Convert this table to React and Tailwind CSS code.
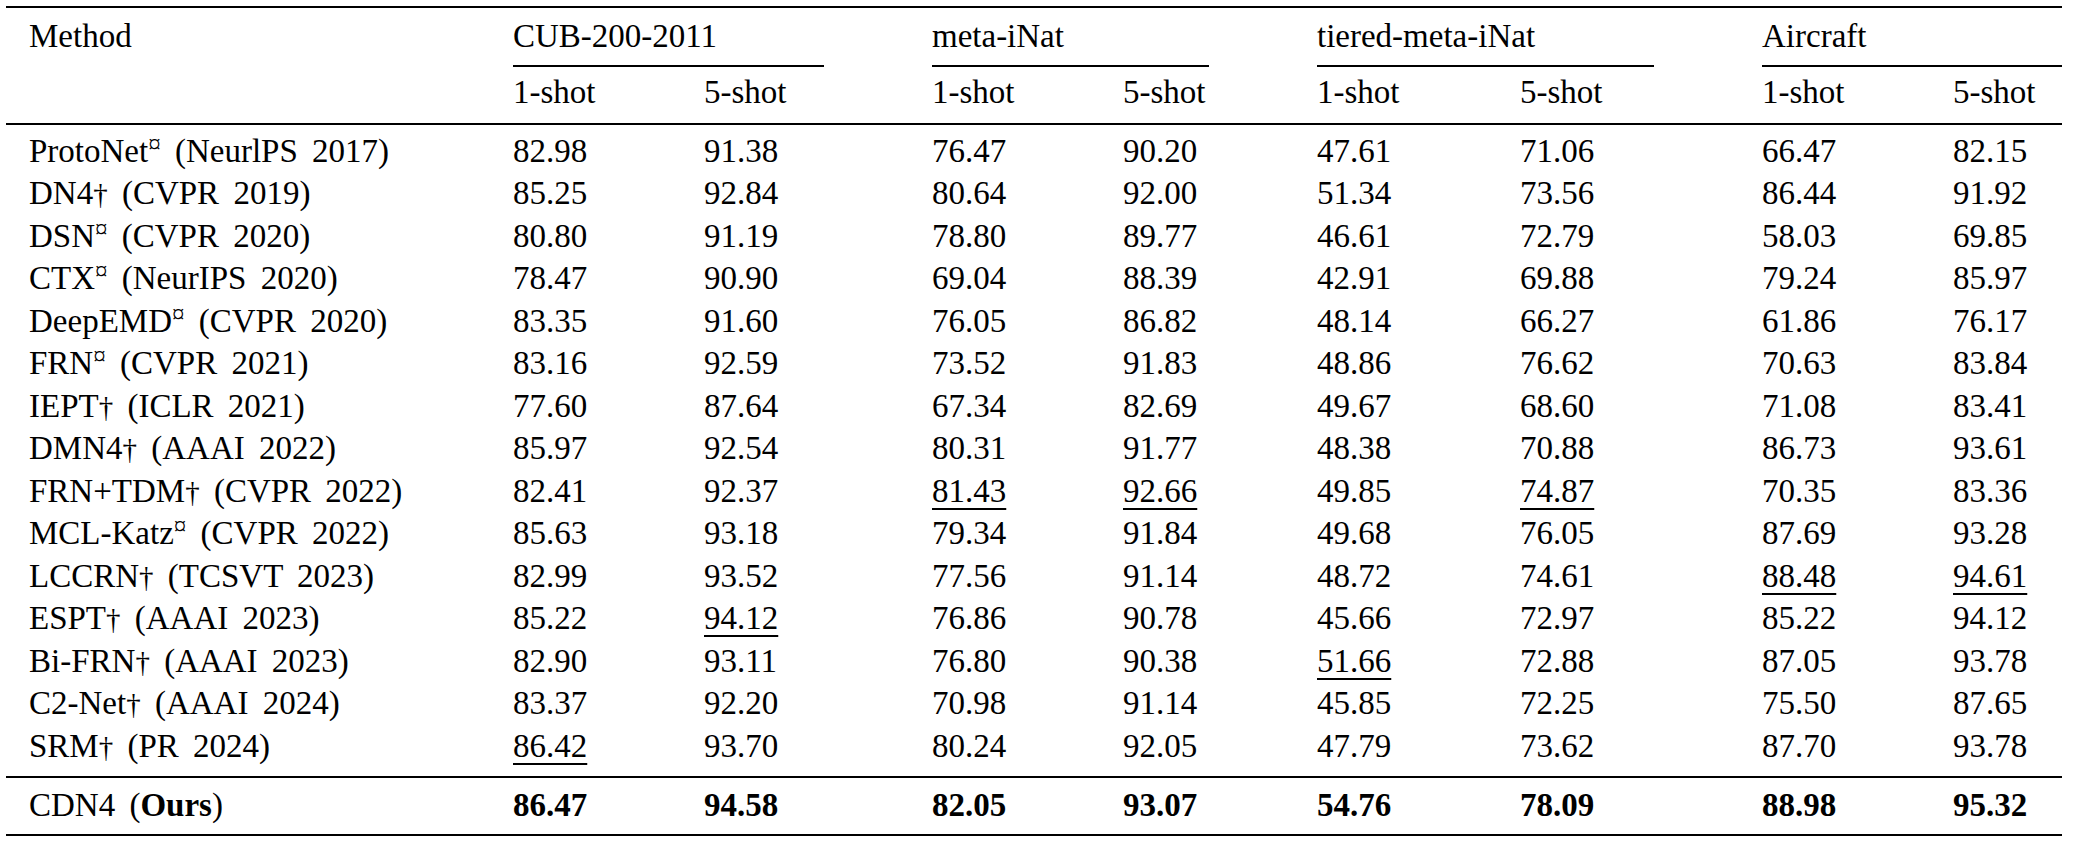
// Few-shot fine-grained classification results table (booktabs style).
import React from 'react';

const COLS = 'grid grid-cols-[507px_191px_228px_191px_194px_203px_242px_191px_109px]';

const groups = ['CUB-200-2011', 'meta-iNat', 'tiered-meta-iNat', 'Aircraft'];

// A leading "_" marks a second-best (underlined) result.
const rows = [
  ['ProtoNet', '¤', 'NeurlPS 2017', ['82.98', '91.38', '76.47', '90.20', '47.61', '71.06', '66.47', '82.15']],
  ['DN4', '†', 'CVPR 2019', ['85.25', '92.84', '80.64', '92.00', '51.34', '73.56', '86.44', '91.92']],
  ['DSN', '¤', 'CVPR 2020', ['80.80', '91.19', '78.80', '89.77', '46.61', '72.79', '58.03', '69.85']],
  ['CTX', '¤', 'NeurIPS 2020', ['78.47', '90.90', '69.04', '88.39', '42.91', '69.88', '79.24', '85.97']],
  ['DeepEMD', '¤', 'CVPR 2020', ['83.35', '91.60', '76.05', '86.82', '48.14', '66.27', '61.86', '76.17']],
  ['FRN', '¤', 'CVPR 2021', ['83.16', '92.59', '73.52', '91.83', '48.86', '76.62', '70.63', '83.84']],
  ['IEPT', '†', 'ICLR 2021', ['77.60', '87.64', '67.34', '82.69', '49.67', '68.60', '71.08', '83.41']],
  ['DMN4', '†', 'AAAI 2022', ['85.97', '92.54', '80.31', '91.77', '48.38', '70.88', '86.73', '93.61']],
  ['FRN+TDM', '†', 'CVPR 2022', ['82.41', '92.37', '_81.43', '_92.66', '49.85', '_74.87', '70.35', '83.36']],
  ['MCL-Katz', '¤', 'CVPR 2022', ['85.63', '93.18', '79.34', '91.84', '49.68', '76.05', '87.69', '93.28']],
  ['LCCRN', '†', 'TCSVT 2023', ['82.99', '93.52', '77.56', '91.14', '48.72', '74.61', '_88.48', '_94.61']],
  ['ESPT', '†', 'AAAI 2023', ['85.22', '_94.12', '76.86', '90.78', '45.66', '72.97', '85.22', '94.12']],
  ['Bi-FRN', '†', 'AAAI 2023', ['82.90', '93.11', '76.80', '90.38', '_51.66', '72.88', '87.05', '93.78']],
  ['C2-Net', '†', 'AAAI 2024', ['83.37', '92.20', '70.98', '91.14', '45.85', '72.25', '75.50', '87.65']],
  ['SRM', '†', 'PR 2024', ['_86.42', '93.70', '80.24', '92.05', '47.79', '73.62', '87.70', '93.78']],
];

const ours = ['86.47', '94.58', '82.05', '93.07', '54.76', '78.09', '88.98', '95.32'];

function Mark({ sym }) {
  if (sym === '¤') {
    return <span className="text-[25px] align-[9px] leading-none">¤</span>;
  }
  return <span className="text-[29px] leading-none">†</span>;
}

function Value({ v }) {
  if (v.startsWith('_')) {
    return (
      <span className="underline decoration-[2px] underline-offset-[6px]">{v.slice(1)}</span>
    );
  }
  return <span>{v}</span>;
}

export default function App() {
  return (
    <div className="min-h-screen bg-white text-black font-['Liberation_Serif','Times_New_Roman',serif] text-[33px] pt-[6px]">
      <div className="ml-[6px] w-[2056px]">
        <div className="h-[2px] bg-black" />

        <div className={`${COLS} h-[57px] pt-[6.6px] leading-[42.5px]`}>
          <div className="pl-[23px]">Method</div>
          {groups.map((g) => (
            <div key={g} className="col-span-2">{g}</div>
          ))}
        </div>

        <div className={`${COLS} h-[1.5px]`}>
          <div />
          {groups.map((g, i) => (
            <div key={g} className={`col-span-2 h-[1.5px] bg-black ${i < 3 ? 'mr-[108px]' : ''}`} />
          ))}
        </div>

        <div className={`${COLS} h-[56.5px] pt-[4px] leading-[42.5px]`}>
          <div />
          {groups.map((g) => (
            <React.Fragment key={g}>
              <div>1-shot</div>
              <div>5-shot</div>
            </React.Fragment>
          ))}
        </div>

        <div className="h-[2px] bg-black" />

        <div className="pt-[4.6px]">
          {rows.map(([name, sym, venue, vals]) => (
            <div key={name} className={`${COLS} h-[42.5px] leading-[42.5px] whitespace-nowrap`}>
              <div className="pl-[23px] [word-spacing:6px]">
                {name}
                <Mark sym={sym} /> ({venue})
              </div>
              {vals.map((v, i) => (
                <div key={i}>
                  <Value v={v} />
                </div>
              ))}
            </div>
          ))}
        </div>

        <div className="mt-[8.6px] h-[2px] bg-black" />

        <div className={`${COLS} h-[56px] pt-[6px] leading-[42.5px]`}>
          <div className="pl-[23px] [word-spacing:6px]">
            CDN4 (<span className="font-bold">Ours</span>)
          </div>
          {ours.map((v, i) => (
            <div key={i} className="font-bold">{v}</div>
          ))}
        </div>

        <div className="h-[2px] bg-black" />
      </div>
    </div>
  );
}
